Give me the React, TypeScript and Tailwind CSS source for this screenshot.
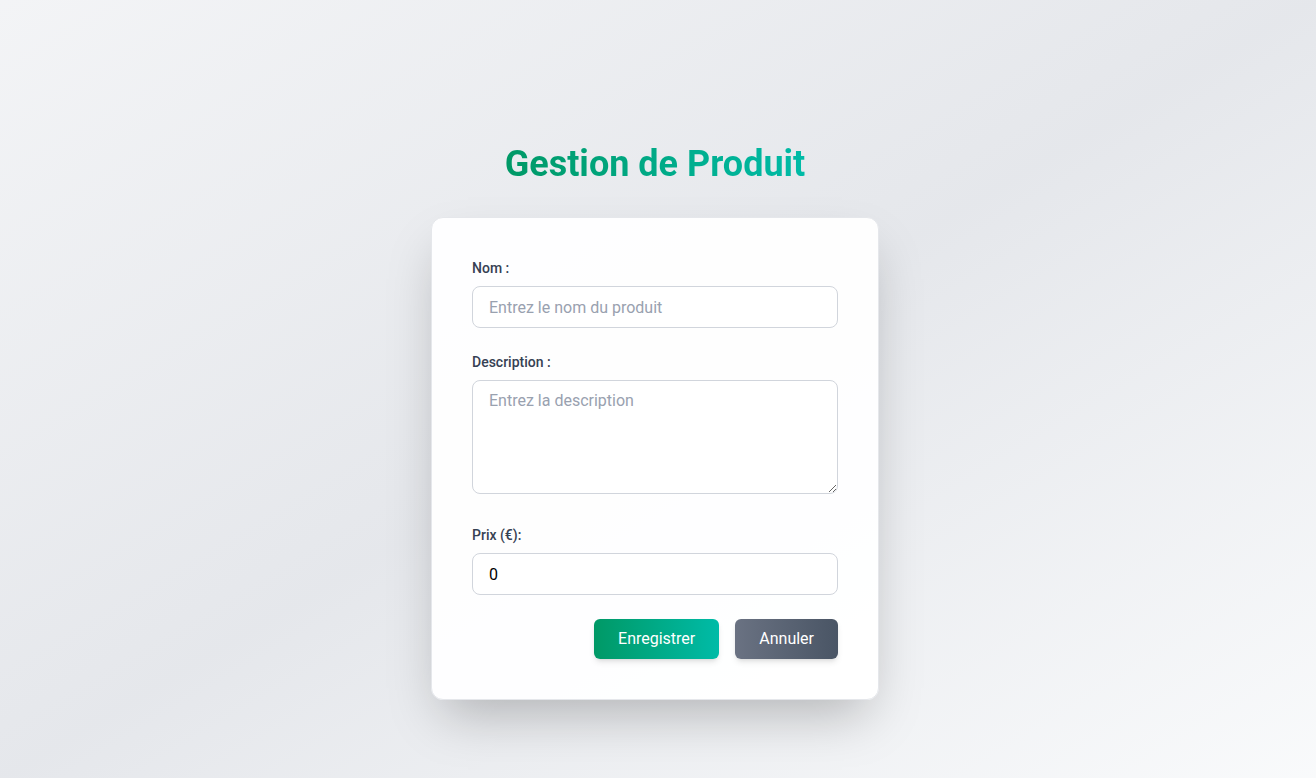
import React from "react";

export default function App() {
  return (
    <div
      className="min-h-screen w-full bg-gradient-to-br from-gray-100 via-gray-200 to-gray-50 flex flex-col items-center pt-[144px] pr-[6px] pb-20"
      style={{ fontFamily: "Roboto, 'Liberation Sans', sans-serif" }}
    >
      <h1 className="text-4xl leading-10 font-bold bg-gradient-to-r from-emerald-600 to-teal-500 bg-clip-text text-transparent mb-[33px]">
        Gestion de Produit
      </h1>
      <form
        className="w-[448px] bg-white/95 border border-gray-200 rounded-xl shadow-2xl p-10 flex flex-col"
        onSubmit={(e) => e.preventDefault()}
      >
        <label className="block text-sm leading-5 font-medium text-gray-700 mb-2">Nom :</label>
        <input
          type="text"
          placeholder="Entrez le nom du produit"
          className="block w-full h-[42px] px-4 py-2 text-base border border-gray-300 rounded-lg bg-white placeholder:text-gray-400 outline-none mb-6"
        />
        <label className="block text-sm leading-5 font-medium text-gray-700 mb-2">Description :</label>
        <textarea
          rows={4}
          placeholder="Entrez la description"
          className="block w-full h-[114px] px-4 py-2 text-base leading-6 border border-gray-300 rounded-lg bg-white placeholder:text-gray-400 outline-none mb-[31px]"
        />
        <label className="block text-sm leading-5 font-medium text-gray-700 mb-2">Prix (€):</label>
        <input
          type="number"
          defaultValue={0}
          className="block w-full h-[42px] px-4 py-2 text-base text-black border border-gray-300 rounded-lg bg-white outline-none mb-6 [appearance:textfield]"
        />
        <div className="flex justify-end gap-4">
          <button
            type="submit"
            className="h-10 px-6 rounded-md text-white text-base bg-gradient-to-r from-emerald-600 to-teal-500 shadow-md"
          >
            Enregistrer
          </button>
          <button
            type="button"
            className="h-10 px-6 rounded-md text-white text-base bg-gradient-to-r from-gray-500 to-gray-600 shadow-md"
          >
            Annuler
          </button>
        </div>
      </form>
    </div>
  );
}
